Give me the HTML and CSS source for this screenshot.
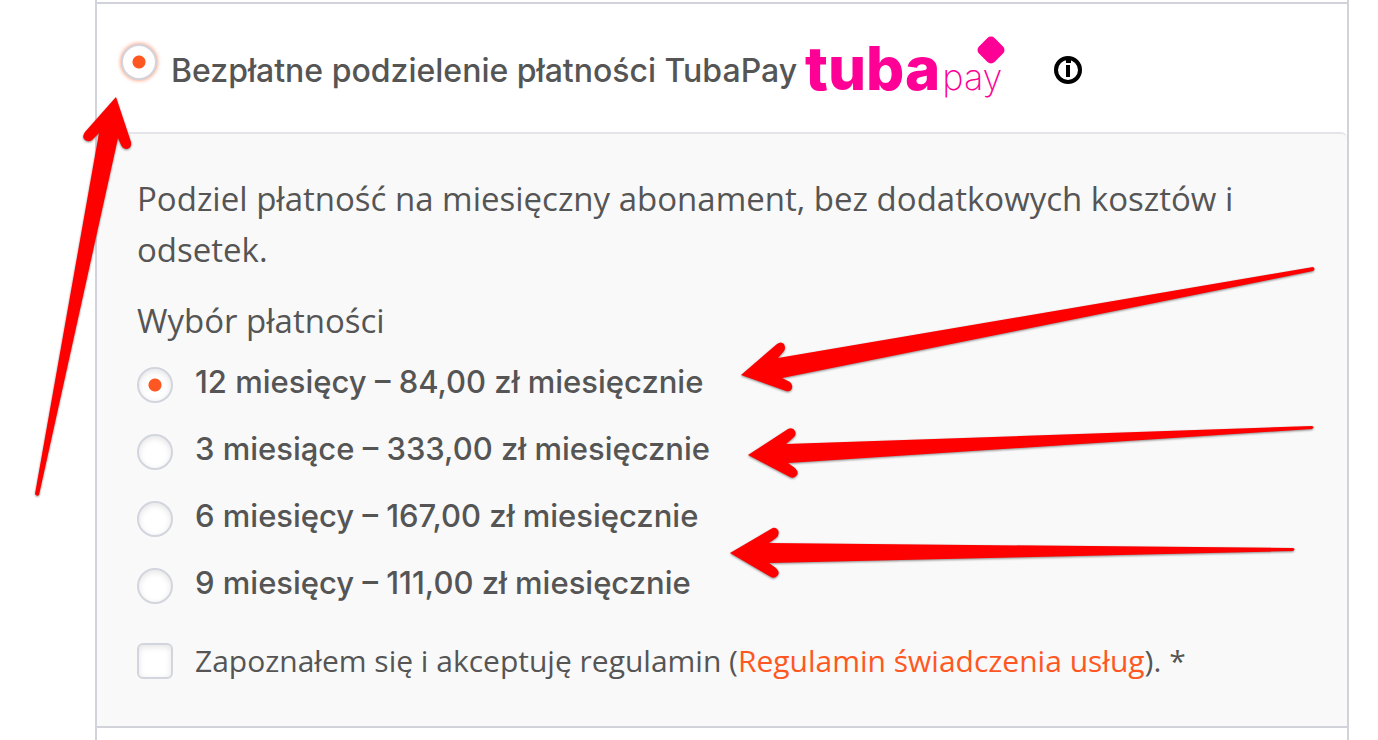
FILE: index.html
```html
<!DOCTYPE html>
<html lang="pl">
<head>
    <meta charset="UTF-8">
    <meta name="viewport" content="width=device-width, initial-scale=1.0">
    <title>TubaPay</title>
    <link rel="stylesheet" href="styles.css">
</head>
<body>
    <form class="payment-methods">
        <div class="method">
            <input class="radio" type="radio" name="method" id="tubapay" checked>
            <label class="method-label" for="tubapay">Bezpłatne podzielenie płatności TubaPay</label>
            <div class="logo">
                <span class="logo-tuba">tuba</span><span class="logo-pay">pay</span>
                <svg class="logo-diamond" viewBox="0 0 28 28" aria-hidden="true">
                    <rect x="3" y="3" width="22" height="22" rx="5" transform="rotate(45 14 14)" fill="#ff0096"/>
                </svg>
            </div>
            <button class="info" type="button" aria-label="Informacje">
                <svg viewBox="0 0 28 28" width="28" height="28" aria-hidden="true">
                    <circle cx="14" cy="14" r="12" fill="#fff" stroke="#000" stroke-width="4"/>
                    <path d="M12 3h5v4h-5zM12 9h4v12h-4z" fill="#000"/>
                </svg>
            </button>
        </div>

        <div class="payment-box">
            <p class="intro">Podziel płatność na miesięczny abonament, bez dodatkowych kosztów i odsetek.</p>
            <fieldset class="installments">
                <legend>Wybór płatności</legend>
                <div class="option">
                    <input class="radio" type="radio" name="months" id="months12" checked>
                    <label for="months12">12 miesięcy – 84,00 zł miesięcznie</label>
                </div>
                <div class="option">
                    <input class="radio" type="radio" name="months" id="months3">
                    <label for="months3">3 miesiące – 333,00 zł miesięcznie</label>
                </div>
                <div class="option">
                    <input class="radio" type="radio" name="months" id="months6">
                    <label for="months6">6 miesięcy – 167,00 zł miesięcznie</label>
                </div>
                <div class="option">
                    <input class="radio" type="radio" name="months" id="months9">
                    <label for="months9">9 miesięcy – 111,00 zł miesięcznie</label>
                </div>
            </fieldset>
            <div class="terms">
                <input class="checkbox" type="checkbox" id="terms">
                <label for="terms">Zapoznałem się i akceptuję regulamin (<a href="#">Regulamin świadczenia usług</a>). *</label>
            </div>
        </div>
    </form>

    <!-- Arrows pointing at the choices -->
    <svg class="arrows" width="1378" height="740" viewBox="0 0 1378 740" aria-hidden="true">
        <path d="M116 97 L131 142 Q132 148 127 149 Q123 149 121 145 L118 138 L39 495 Q37 497 35 494 L99 133 L92 140 Q88 143 84 139 Q82 136 85 132 Z"/>
        <path d="M741 375 L777 344 Q781 341 784 344 Q786 348 784 351 L778 358 L1313 267 Q1316 269 1313 271 L782 378 L790 382 Q794 386 791 390 Q789 392 786 391 Z"/>
        <path d="M748 455 L788 429 Q793 427 795 431 Q797 435 793 438 L786 444 L1312 426 Q1315 427 1312 429 L788 463 L795 468 Q799 472 797 475 Q794 479 790 477 Z"/>
        <path d="M730 553 L771 529 Q775 526 778 530 Q780 535 776 538 L769 543 L1293 548 Q1296 549 1293 551 L769 563 L776 568 Q780 572 778 575 Q775 579 771 577 Z"/>
    </svg>
</body>
</html>
```
FILE: styles.css
```css
* {
    box-sizing: border-box;
}
body {
    margin: 0;
    background-color: #fff;
    color: #555;
    font-family: "Open Sans", "Noto Sans", sans-serif;
    font-size: 33px;
    line-height: 51px;
}
.payment-methods {
    min-height: 100vh;
    margin: 0 29px 0 95px;
    padding-top: 2px;
    border: solid #d2d3da;
    border-width: 0 2px;
}
.method {
    display: flex;
    align-items: center;
    min-height: 130px;
    padding: 4px 24px 0;
    border-top: 2px solid #d2d3da;
}
.radio,
.checkbox {
    appearance: none;
    flex: none;
    width: 36px;
    height: 36px;
    margin: 0;
    border: 2px solid #d2d5dd;
    background-color: #fff;
    box-shadow: inset 0 2px 6px #e4e4e4;
}
.radio {
    border-radius: 50%;
}
.checkbox {
    border-radius: 6px;
}
.radio:checked {
    background-image: radial-gradient(circle, #ff5722 6px, transparent 7px);
}
.method .radio {
    margin-bottom: 16px;
    box-shadow: 0 0 4px #ff7f55;
}
.method-label,
.option label {
    font-family: Inter, sans-serif;
    font-weight: 500;
}
.method-label {
    margin-left: 14px;
    font-size: 32px;
}
.option label {
    font-size: 31px;
}
.logo {
    position: relative;
    display: flex;
    align-items: baseline;
    width: 200px;
    margin-left: 8px;
    padding-top: 5px;
    color: #ff0096;
    font-family: Inter, sans-serif;
}
.logo-tuba {
    font-size: 60px;
    font-weight: 800;
}
.logo-pay {
    margin-left: 2px;
    font-size: 36px;
    font-weight: 200;
}
.logo-diamond {
    position: absolute;
    top: -2px;
    right: 0;
    width: 28px;
    height: 28px;
}
.info {
    display: flex;
    margin-left: 49px;
    padding: 0;
    border: 0;
    background: none;
    cursor: pointer;
}
.payment-box {
    padding: 39px 40px 40px;
    border-top: 2px solid #e4e4e9;
    border-bottom: 2px solid #d2d3da;
    border-top-right-radius: 6px;
    background-color: #f9f9f9;
}
.intro {
    margin: 0 0 20px;
}
.installments {
    margin: 0;
    padding: 0;
    border: 0;
}
.installments legend {
    margin-bottom: 5px;
    padding: 0;
}
.option,
.terms {
    display: flex;
    align-items: center;
    gap: 22px;
}
.option {
    height: 67px;
}
.option label {
    padding-bottom: 6px;
}
.terms {
    margin-top: 16px;
    font-size: 30px;
}
.terms a {
    color: #ff5722;
    text-decoration: none;
}
.arrows {
    position: absolute;
    top: 0;
    left: 0;
    fill: #ff0000;
    filter: drop-shadow(0 1px 1px #888);
    pointer-events: none;
}
```
